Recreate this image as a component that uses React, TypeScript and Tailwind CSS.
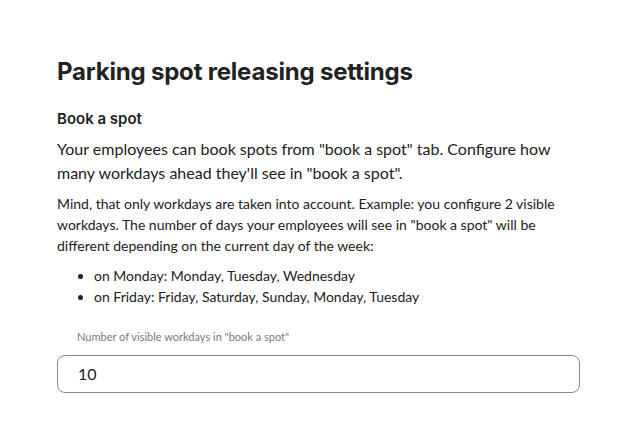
export default function App() {
  return (
    <div className="min-h-screen bg-white px-[57px] pt-[57px] text-[#222222]" style={{ fontFamily: 'Lato, "Noto Sans", sans-serif' }}>
      <h1 className="text-[24px] font-bold leading-[30px] tracking-[-0.2px]" style={{ fontFamily: 'Inter, sans-serif' }}>
        Parking spot releasing settings
      </h1>
      <h2 className="mt-[22px] text-[15px] font-semibold leading-[20px]" style={{ fontFamily: 'Inter, sans-serif' }}>
        Book a spot
      </h2>
      <p className="mt-[8px] text-[16px] leading-[24px]">
        Your employees can book spots from "book a spot" tab. Configure how many workdays ahead they'll see in "book a spot".
      </p>
      <p className="mt-[8px] text-[14px] leading-[21px]">
        Mind, that only workdays are taken into account. Example: you configure 2 visible workdays. The number of days your employees will see in "book a spot" will be different depending on the current day of the week:
      </p>
      <ul className="mt-[9px] list-disc pl-[37px] text-[14px] leading-[21px]">
        <li>on Monday: Monday, Tuesday, Wednesday</li>
        <li>on Friday: Friday, Saturday, Sunday, Monday, Tuesday</li>
      </ul>
      <label className="mt-[22px] block pl-[20px] text-[11px] leading-[16px] text-[#7a7a7a]">
        Number of visible workdays in "book a spot"
      </label>
      <div className="mt-[10px] flex h-[38px] items-center rounded-[8px] border border-[#8a8a8a] px-[20px] text-[16px]">
        10
      </div>
    </div>
  )
}
